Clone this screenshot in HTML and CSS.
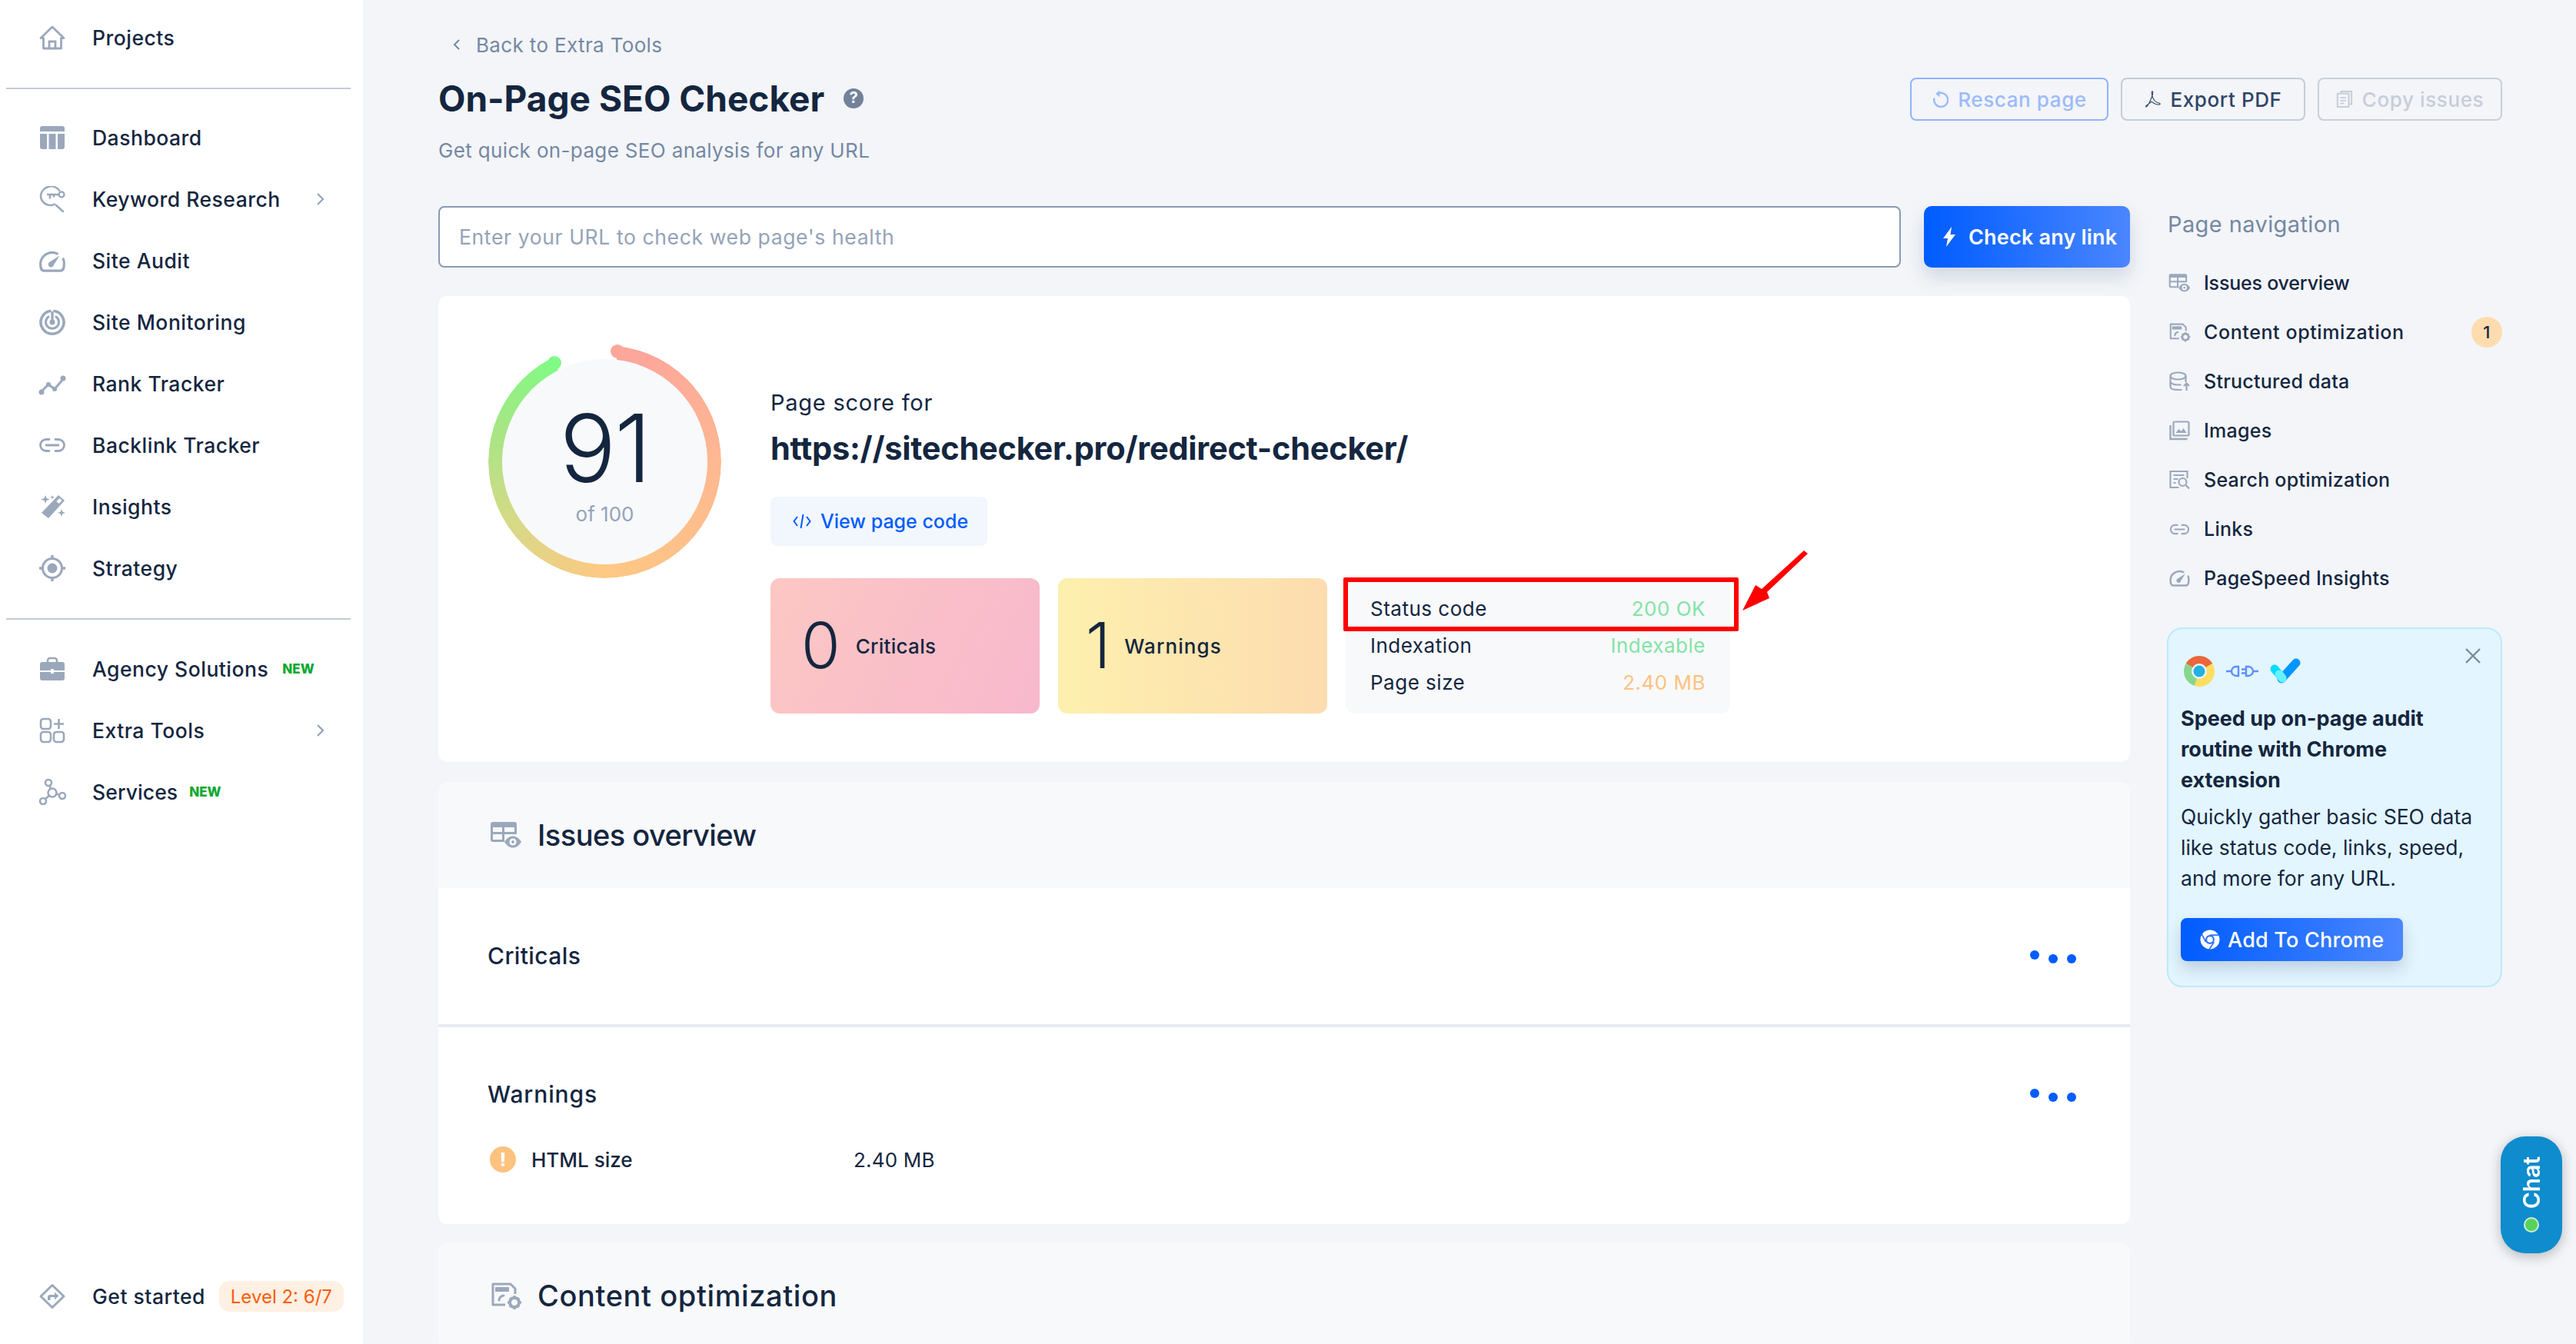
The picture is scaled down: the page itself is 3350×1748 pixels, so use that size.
FILE: index.html
```html
<!DOCTYPE html>
<html lang="en">
<head>
<meta charset="utf-8">
<title>On-Page SEO Checker</title>
<link rel="stylesheet" href="styles.css">
</head>
<body>
<svg class="defs" width="0" height="0">
  <symbol id="i-link" viewBox="0 0 34 20"><path d="M13 2.500H9a7.500 7.500 0 0 0 0 15h4M21 2.500h4a7.500 7.500 0 0 1 0 15h-4M9 10h16" fill="none" stroke="currentColor" stroke-width="2.800" stroke-linecap="round"/></symbol>
  <symbol id="i-gauge" viewBox="0 0 34 28"><path d="M23 4.500A14.500 14.500 0 0 0 2.500 16c0 4 0 9 4 9.500h21c4-.5 4-5.500 4-9.500 0-2-.4-3.500-1-5" fill="none" stroke="currentColor" stroke-width="3" stroke-linecap="round"/><path d="M26 7l-7 11a3.500 3.500 0 1 1-5-3.500z" fill="currentColor"/></symbol>
  <symbol id="i-issues" viewBox="0 0 42 36"><path fill-rule="evenodd" d="M4 1h28a3 3 0 0 1 3 3v13H19v10H4a3 3 0 0 1-3-3V4a3 3 0 0 1 3-3zM4 8v6h12V8zM19 8v6h13V8zM4 17v7h12v-7z" fill="currentColor"/><path d="M19 27c3-5 7-7.500 11-7.500s8 2.500 11 7.500c-3 5-7 7.500-11 7.500S22 32 19 27z" fill="currentColor"/><circle cx="30" cy="27" r="4.500" fill="#fff"/><circle cx="30" cy="27" r="2" fill="currentColor"/></symbol>
  <symbol id="i-content" viewBox="0 0 42 36"><path d="M20 30H4V3h23l6 6v7" fill="none" stroke="currentColor" stroke-width="3" stroke-linejoin="round"/><rect x="7" y="7" width="18" height="6" fill="currentColor"/><path d="M18 18a7 7 0 0 0-6 6" fill="none" stroke="currentColor" stroke-width="3" stroke-linecap="round"/><circle cx="32" cy="27" r="6" fill="none" stroke="currentColor" stroke-width="4"/><path d="M32 18v4M32 32v4M23 27h4M37 27h4M26 21l3 3M35 30l3 3M38 21l-3 3M29 30l-3 3" stroke="currentColor" stroke-width="3"/></symbol>
</svg>

<div class="app">
  <aside class="sidebar">
    <a class="side-row"><svg class="side-icon" viewBox="0 0 36 34"><path d="M3 17.500 18 3l15 14.500h-3.500V31h-23V17.500z" fill="none" stroke="currentColor" stroke-width="2.800" stroke-linejoin="round"/><path d="M14 31v-9h8v9" fill="none" stroke="currentColor" stroke-width="2.800"/></svg><span>Projects</span></a>
    <div class="side-rule"></div>
    <a class="side-row"><svg class="side-icon" viewBox="0 0 36 34"><path d="M2 5a3 3 0 0 1 3-3h26a3 3 0 0 1 3 3v4H2zM2 12h9v20H5a3 3 0 0 1-3-3zM13.500 12h9v20h-9zM25 12h9v17a3 3 0 0 1-3 3h-6z" fill="currentColor"/></svg><span>Dashboard</span></a>
    <a class="side-row"><svg class="side-icon" viewBox="0 0 36 34"><path d="M27 5.500A13.500 13.500 0 0 0 3 12.500C3 20 9 25 16 25c2 0 3.500-.4 5-1.500M23 25l9 8" fill="none" stroke="currentColor" stroke-width="2.600" stroke-linecap="round"/><path d="M11 11h15M15 11v5.500M20 11v3.500" fill="none" stroke="currentColor" stroke-width="2.600"/><circle cx="30" cy="11" r="3.500" fill="none" stroke="currentColor" stroke-width="2.400"/></svg><span>Keyword Research</span><svg class="chev" viewBox="0 0 12 18"><path d="M2 2l7 7-7 7" fill="none" stroke="currentColor" stroke-width="2.200"/></svg></a>
    <a class="side-row"><svg class="side-icon" viewBox="0 0 36 34"><use href="#i-gauge" width="36" height="30" y="3"/></svg><span>Site Audit</span></a>
    <a class="side-row"><svg class="side-icon" viewBox="0 0 36 34"><path d="M15 2.500a15 15 0 1 0 6 0" fill="none" stroke="currentColor" stroke-width="3.600" stroke-linecap="round"/><path d="M13 10a8.500 8.500 0 1 0 10 0" fill="none" stroke="currentColor" stroke-width="3" stroke-linecap="round"/><path d="M18 3v14" stroke="currentColor" stroke-width="3.400"/><circle cx="18" cy="17" r="3.500" fill="currentColor"/></svg><span>Site Monitoring</span></a>
    <a class="side-row"><svg class="side-icon" viewBox="0 0 36 34"><path d="M3 28 13 18l8 6 12-14" fill="none" stroke="currentColor" stroke-width="3" stroke-linecap="round" stroke-linejoin="round"/><circle cx="4" cy="28" r="3.500" fill="currentColor"/><circle cx="13" cy="18" r="3" fill="currentColor"/><circle cx="21" cy="24" r="3" fill="currentColor"/><circle cx="32" cy="10" r="3.500" fill="currentColor"/></svg><span>Rank Tracker</span></a>
    <a class="side-row"><svg class="side-icon" viewBox="0 0 36 34"><use href="#i-link" x="1" y="7" width="34" height="20"/></svg><span>Backlink Tracker</span></a>
    <a class="side-row"><svg class="side-icon" viewBox="0 0 36 34"><path d="M26 2l8 7-21 23-9-7z" fill="currentColor"/><path d="M27.500 6l3 3-4 4-3-3z" fill="#fff"/><path d="M9 2l1.500 4L15 7.500 10.500 9 9 13 7.500 9 3 7.500 7.500 6zM18 2l.8 2 2 .8-2 .8-.8 2-.8-2-2-.8 2-.8zM30 20l1.300 3.700L35 25l-3.700 1.300L30 30l-1.300-3.700L25 25l3.700-1.300z" fill="currentColor"/></svg><span>Insights</span></a>
    <a class="side-row"><svg class="side-icon" viewBox="0 0 36 34"><circle cx="18" cy="17" r="12.500" fill="none" stroke="currentColor" stroke-width="3"/><circle cx="18" cy="17" r="6.500" fill="currentColor"/><path d="M18 0v4M18 30v4M1 17h4M31 17h4" stroke="currentColor" stroke-width="3.400"/></svg><span>Strategy</span></a>
    <div class="side-rule side-rule-2"></div>
    <a class="side-row"><svg class="side-icon" viewBox="0 0 36 34"><path d="M12 8V6a3 3 0 0 1 3-3h6a3 3 0 0 1 3 3v2" fill="none" stroke="currentColor" stroke-width="2.600"/><path d="M2 11a3 3 0 0 1 3-3h26a3 3 0 0 1 3 3v8H20v-2h-4v2H2zM2 21h14v2h4v-2h14v8a3 3 0 0 1-3 3H5a3 3 0 0 1-3-3z" fill="currentColor"/></svg><span>Agency Solutions</span><em class="new">NEW</em></a>
    <a class="side-row"><svg class="side-icon" viewBox="0 0 36 34"><rect x="3" y="2" width="13" height="13" rx="3.500" fill="none" stroke="currentColor" stroke-width="2.600"/><rect x="3" y="19" width="13" height="13" rx="3.500" fill="none" stroke="currentColor" stroke-width="2.600"/><rect x="20" y="19" width="13" height="13" rx="3.500" fill="none" stroke="currentColor" stroke-width="2.600"/><path d="M26.500 2v13M20 8.500h13" stroke="currentColor" stroke-width="2.600"/></svg><span>Extra Tools</span><svg class="chev" viewBox="0 0 12 18"><path d="M2 2l7 7-7 7" fill="none" stroke="currentColor" stroke-width="2.200"/></svg></a>
    <a class="side-row"><svg class="side-icon" viewBox="0 0 36 34"><g fill="none" stroke="currentColor" stroke-width="2.600"><circle cx="13" cy="5" r="4"/><circle cx="18" cy="18" r="5.500"/><circle cx="31" cy="22" r="4"/><circle cx="6" cy="29" r="4"/><path d="M14.500 9l1.500 4M23.500 19.500l4 1.200M14 22l-5 4"/></g></svg><span class="services">Services</span><em class="new new-services">NEW</em></a>
    <a class="side-row side-bottom"><svg class="side-icon" viewBox="0 0 36 34"><path d="M18 2.500 33 17 18 31.500 3 17z" fill="none" stroke="currentColor" stroke-width="3" stroke-linejoin="round"/><path d="M12 22v-4a3 3 0 0 1 3-3h6v-3.500l5.500 5-5.500 5V18h-5.500v4z" fill="currentColor"/></svg><span>Get started</span><b class="level">Level 2: 6/7</b></a>
  </aside>

  <main class="main">
    <header class="page-head">
      <div class="head-text">
        <a class="back"><svg class="back-chev" viewBox="0 0 10 16"><path d="M8 2 2 8l6 6" fill="none" stroke="currentColor" stroke-width="2"/></svg>Back to Extra Tools</a>
        <h1 class="title">On-Page SEO Checker<svg class="help" viewBox="0 0 26 26"><circle cx="13" cy="13" r="13" fill="#718299"/><text x="13" y="19" text-anchor="middle" class="help-q">?</text></svg></h1>
        <p class="subtitle">Get quick on-page SEO analysis for any URL</p>
      </div>
      <div class="head-actions">
        <button class="act act-rescan"><svg viewBox="0 0 20 26" class="act-i"><path d="M6 6.500a9 9 0 1 1-3.500 5" fill="none" stroke="currentColor" stroke-width="2.400"/><path d="M9.500 1.500v9L4 6z" fill="currentColor"/></svg>Rescan page</button>
        <button class="act act-export"><svg viewBox="0 0 24 26" class="act-i"><path d="M11 2c-1.500 0-1 4 0 7 1.500 5 4 8 8 9 3 .8 4 2 2 2.500-4 1-9-2-11-4-2 1.500-7 5-8 6s0 2.500 2 0c2-3 5-9 7-15 .8-2.500 1-5.500 0-5.500z" fill="none" stroke="currentColor" stroke-width="1.200"/></svg>Export PDF</button>
        <button class="act act-copy"><svg viewBox="0 0 24 26" class="act-i"><path d="M7 5V2h15v18h-4" fill="none" stroke="currentColor" stroke-width="2.200"/><path d="M2 5h16v19H2z" fill="none" stroke="currentColor" stroke-width="2.200" stroke-linejoin="round"/><path d="M6 11h8M6 15h8M6 19h5" stroke="currentColor" stroke-width="2"/></svg>Copy issues</button>
      </div>
    </header>

    <div class="columns">
      <div class="content">
        <div class="search">
          <div class="search-input">Enter your URL to check web page's health</div>
          <button class="search-btn"><svg class="bolt" viewBox="0 0 18 26"><path d="M12 0 1 15h6L5 26l12-16h-6.500z" fill="#fff"/></svg>Check any link</button>
        </div>

        <section class="score-card">
          <div class="gauge">
            <div class="gauge-ring"></div>
            <span class="cap cap-start"></span>
            <span class="cap cap-end"></span>
            <div class="gauge-face">
              <div class="gauge-num">91</div>
              <div class="gauge-of">of 100</div>
            </div>
          </div>
          <div class="score-info">
            <div class="score-for">Page score for</div>
            <div class="score-url">https://sitechecker.pro/redirect-checker/</div>
            <a class="code-btn"><svg class="code-i" viewBox="0 0 24 20"><path d="M6 4 1.500 10 6 16M18 4l4.500 6-4.500 6M13.500 1l-3 18" fill="none" stroke="currentColor" stroke-width="2"/></svg>View page code</a>
            <div class="tiles">
              <div class="tile tile-crit"><span class="tile-num">0</span><span class="tile-label">Criticals</span></div>
              <div class="tile tile-warn"><span class="tile-num">1</span><span class="tile-label">Warnings</span></div>
              <div class="stats">
                <div class="stat"><span>Status code</span><span class="ok">200 OK</span></div>
                <div class="stat"><span>Indexation</span><span class="ok">Indexable</span></div>
                <div class="stat"><span>Page size</span><span class="warn">2.40 MB</span></div>
                <div class="mark-box"></div>
                <svg class="mark-arrow" viewBox="0 0 90 84"><path d="M82 1l5 4-53 50 3 8L2 79l17-33 8 5z" fill="#f00"/></svg>
              </div>
            </div>
          </div>
        </section>

        <section class="panel">
          <div class="panel-head"><svg class="panel-i"><use href="#i-issues"/></svg><h2 class="panel-t-a">Issues overview</h2></div>
          <div class="panel-row panel-row-a"><span>Criticals</span><span class="dots"><i class="up"></i><i></i><i></i></span></div>
          <div class="panel-row panel-row-b">
            <div class="row-top"><span class="warn-head">Warnings</span><span class="dots"><i class="up"></i><i></i><i></i></span></div>
            <div class="issue"><span class="issue-mark">!</span><span class="issue-name">HTML size</span><span class="issue-val">2.40 MB</span></div>
          </div>
        </section>

        <section class="panel">
          <div class="panel-head"><svg class="panel-i"><use href="#i-content"/></svg><h2 class="panel-t-b">Content optimization</h2></div>
        </section>
      </div>

      <aside class="rail">
        <h3 class="rail-title">Page navigation</h3>
        <nav class="rail-nav">
          <a class="rail-tight"><svg class="rail-i"><use href="#i-issues"/></svg>Issues overview</a>
          <a class="rail-wide"><svg class="rail-i"><use href="#i-content"/></svg>Content optimization<b class="count">1</b></a>
          <a><svg class="rail-i" viewBox="0 0 28 26"><g fill="none" stroke="currentColor" stroke-width="2.200"><ellipse cx="12" cy="6" rx="10" ry="4.500"/><path d="M2 6v14c0 2.500 4 4 10 4h5M22 6v8M2 13c0 2.500 4 4.500 10 4.500h4"/><path d="M23 25v-9M19.500 19l3.500-3.500 3.500 3.500"/></g></svg>Structured data</a>
          <a><svg class="rail-i" viewBox="0 0 28 26"><path d="M2 6v18h22" fill="none" stroke="currentColor" stroke-width="2.400"/><rect x="6" y="1.500" width="20" height="18" rx="1.500" fill="none" stroke="currentColor" stroke-width="2.200"/><path d="M9 16l4-5 3 3 3-4 4 6z" fill="currentColor"/></svg>Images</a>
          <a><svg class="rail-i" viewBox="0 0 28 26"><path d="M13 23H2V2h22v9" fill="none" stroke="currentColor" stroke-width="2.200"/><path d="M6 7h14M6 12h6M6 17h3" stroke="currentColor" stroke-width="2.200"/><circle cx="18" cy="16" r="5" fill="none" stroke="currentColor" stroke-width="2.200"/><path d="M22 20l4.500 4.500" stroke="currentColor" stroke-width="2.400"/></svg>Search optimization</a>
          <a><svg class="rail-i" viewBox="0 0 28 26"><use href="#i-link" y="6" width="28" height="15"/></svg>Links</a>
          <a><svg class="rail-i" viewBox="0 0 28 26"><use href="#i-gauge" y="1" width="28" height="24"/></svg>PageSpeed Insights</a>
        </nav>

        <div class="promo">
          <div class="promo-top">
            <svg class="promo-chrome" viewBox="0 0 40 40">
              <path d="M20 20 2.700 10A20 20 0 0 1 37.300 10z" fill="#ea673b"/>
              <path d="M20 20 2.700 10A20 20 0 0 0 14 39.100z" fill="#86d78c"/>
              <path d="M20 20 37.300 10A20 20 0 0 1 14 39.100z" fill="#ffdd5e"/>
              <circle cx="20" cy="20" r="10" fill="#e8f5fb"/>
              <circle cx="20" cy="20" r="7.500" fill="#22b1e0"/>
            </svg>
            <svg class="promo-plug" viewBox="0 0 42 16"><g fill="none" stroke="#5b8efc" stroke-width="2.400"><path d="M0 8h6M16 2h-3a6 6 0 0 0 0 12h3zM26 2h3a6 6 0 0 1 0 12h-3zM20 5.500h6M20 10.500h6M36 8h6"/></g></svg>
            <svg class="promo-check" viewBox="0 0 40 34"><path d="M15 27 34 6" stroke="#0096ff" stroke-width="11" stroke-linecap="round"/><path d="M6 14l10 12" stroke="#00dcff" stroke-width="11" stroke-linecap="round"/><path d="M12 21l4 5" stroke="#66f1ff" stroke-width="11" stroke-linecap="round"/></svg>
            <svg class="promo-x" viewBox="0 0 20 20"><path d="M1 1l18 18M19 1 1 19" stroke="#7a8aa0" stroke-width="2.400"/></svg>
          </div>
          <h4 class="promo-title">Speed up on-page audit routine with Chrome extension</h4>
          <p class="promo-text">Quickly gather basic SEO data like status code, links, speed, and more for any URL.</p>
          <button class="promo-btn"><svg class="promo-btn-i" viewBox="0 0 24 24"><circle cx="12" cy="12" r="11.500" fill="#fff"/><circle cx="12" cy="12" r="5.500" fill="#2f72ff"/><circle cx="12" cy="12" r="3.500" fill="#fff"/><path d="M12 6.500H23M7.200 15 2 5.500M16.800 15 11 24" stroke="#2f72ff" stroke-width="1.600"/></svg>Add To Chrome</button>
        </div>
      </aside>
    </div>
  </main>
</div>

<div class="chat"><span class="chat-text">Chat</span><span class="chat-dot"></span></div>
</body>
</html>
```
FILE: styles.css
```css
* { box-sizing: border-box; }
html, body { margin: 0; padding: 0; }
body {
  width: 3350px;
  height: 1748px;
  overflow: hidden;
  background: #f3f5f8;
  color: #14263f;
  font-family: "Inter", "Liberation Sans", sans-serif;
  position: relative;
}
.defs { position: absolute; }
h1, h2, h3, h4, p { margin: 0; font-weight: inherit; }
button { font-family: inherit; cursor: pointer; }

.app { display: flex; height: 1748px; }

/* Sidebar */
.sidebar {
  width: 472px;
  flex: none;
  background: #fff;
  display: flex;
  flex-direction: column;
  padding: 9px 16px 22px 8px;
  color: #9ba8bc;
}
.side-row {
  height: 80px;
  display: flex;
  align-items: center;
  flex: none;
  padding-left: 42px;
  color: #14263f;
  font-size: 26.500px;
  font-weight: 500;
  letter-spacing: .5px;
}
.side-icon { width: 36px; height: 34px; flex: none; color: #9ba8bc; margin-right: 34px; }
.chev { width: 12px; height: 18px; color: #94a3b8; margin-left: auto; margin-right: 33px; }
.side-rule { height: 2px; margin: 25px 0 23px; background: #c5cbd8; flex: none; }
.side-rule-2 { margin: 25px 0 24px; }
.new { font-style: normal; font-weight: 800; font-size: 17px; color: #0aa82e; margin-left: 18px; letter-spacing: 0; }
.services { letter-spacing: .1px; }
.new-services { margin-left: 15px; }
.side-bottom { margin-top: auto; }
.level {
  margin-left: 18px;
  height: 40px;
  width: 162px;
  border-radius: 14px;
  background: #fef0e2;
  color: #fc5c0a;
  font-size: 24px;
  font-weight: 400;
  display: flex;
  align-items: center;
  justify-content: center;
  letter-spacing: 0;
}

/* Main */
.main { flex: 1; min-width: 0; padding: 40px 96px 0 98px; overflow: hidden; }
.page-head { display: flex; justify-content: space-between; align-items: flex-start; }
.back { display: flex; align-items: center; height: 36px; color: #7588a3; font-size: 26px; letter-spacing: .35px; padding-left: 19px; }
.back-chev { width: 10px; height: 16px; margin-right: 20px; }
.title { display: flex; align-items: center; height: 60px; margin-top: 22px; font-size: 46px; font-weight: 700; line-height: 60px; color: #14263f; }
.help { width: 26px; height: 26px; margin-left: 25px; }
.help-q { fill: #fff; font-size: 20px; font-weight: 700; }
.subtitle { margin-top: 20px; height: 36px; line-height: 36px; font-size: 26px; letter-spacing: .35px; color: #7588a3; }
.head-actions { display: flex; gap: 16px; margin-top: 61px; }
.act {
  height: 56px;
  display: flex;
  align-items: center;
  justify-content: center;
  gap: 12px;
  background: transparent;
  border: 2px solid #c5ccd9;
  border-radius: 8px;
  font-size: 26px;
  font-weight: 500;
  letter-spacing: .6px;
  padding: 0;
}
.act-i { width: 22px; height: 26px; flex: none; }
.act-rescan { width: 258px; border-color: #8fb4fc; color: #9dbbfb; }
.act-export { width: 240px; color: #2f4468; }
.act-copy { width: 240px; color: #c7cdd9; border-color: #c9cfda; }

.columns { display: flex; gap: 50px; margin-top: 54px; }
.content { width: 2200px; flex: none; }
.search { display: flex; gap: 30px; height: 80px; }
.search-input {
  flex: 1;
  display: flex;
  align-items: center;
  background: #fff;
  border: 2px solid #8a9ab3;
  border-radius: 8px;
  padding-left: 25px;
  color: #94a3b8;
  font-size: 26.500px;
  letter-spacing: .63px;
}
.search-btn {
  width: 268px;
  flex: none;
  border: 0;
  border-radius: 10px;
  background: linear-gradient(90deg, #005cff, #4a86ff);
  box-shadow: 0 12px 24px rgba(30, 60, 110, .16);
  color: #fff;
  font-size: 27px;
  font-weight: 600;
  letter-spacing: .2px;
  display: flex;
  align-items: center;
  padding: 0 0 0 24px;
  gap: 16px;
  white-space: nowrap;
}
.bolt { width: 18px; height: 26px; flex: none; }

/* Score card */
.score-card {
  margin-top: 37px;
  height: 606px;
  background: #fff;
  border-radius: 12px;
  padding: 64px 0 0 65px;
  display: flex;
  gap: 64px;
}
.gauge { width: 303px; height: 303px; flex: none; position: relative; }
.gauge-ring {
  position: absolute;
  inset: 0;
  border-radius: 50%;
  background: conic-gradient(from 0deg, transparent 6.500deg, #fda69b 6.500deg, #fda69b 20deg, #feb892 90deg, #fec883 180deg, #d8d987 235deg, #a8e584 285deg, #80fa85 333deg, transparent 333deg, transparent 360deg);
  -webkit-mask: radial-gradient(closest-side, transparent calc(100% - 19px), #000 calc(100% - 18px));
  mask: radial-gradient(closest-side, transparent calc(100% - 19px), #000 calc(100% - 18px));
}
.cap { position: absolute; width: 18px; height: 18px; border-radius: 50%; }
.cap-start { left: 159px; top: -1px; background: #fda69b; }
.cap-end { left: 77px; top: 14px; background: #80fa85; }
.gauge-face {
  position: absolute;
  inset: 18px;
  border-radius: 50%;
  background: #f8f9fb;
  display: flex;
  flex-direction: column;
  align-items: center;
}
.gauge-num { margin-top: 66px; height: 100px; line-height: 100px; font-size: 122px; font-weight: 300; color: #14263f; letter-spacing: -2px; }
.gauge-of { margin-top: 19px; font-size: 26px; line-height: 34px; color: #94a3b8; }

.score-info { padding-top: 57px; flex: 1; min-width: 0; }
.score-for { height: 36px; line-height: 36px; font-size: 29px; letter-spacing: .75px; color: #14263f; }
.score-url { margin-top: 11px; height: 60px; line-height: 60px; font-size: 41.500px; font-weight: 700; color: #14263f; letter-spacing: -.25px; }
.code-btn {
  margin-top: 33px;
  width: 282px;
  height: 64px;
  border-radius: 8px;
  background: #f2f7fe;
  color: #005cff;
  font-size: 25px;
  font-weight: 500;
  display: flex;
  align-items: center;
  padding-left: 29px;
}
.code-i { width: 24px; height: 20px; margin-right: 12px; flex: none; }
.tiles { margin-top: 42px; display: flex; gap: 24px; align-items: stretch; height: 176px; }
.tile { width: 350px; border-radius: 12px; display: flex; align-items: center; padding-left: 40px; }
.tile-crit { background: linear-gradient(115deg, #fcc7c3, #f7b8cd); }
.tile-warn { background: linear-gradient(90deg, #fdf0ae, #fddcaf); padding-left: 36px; }
.tile-num { font-size: 82px; font-weight: 300; line-height: 1; color: #14263f; }
.tile-label { margin-left: 18px; font-size: 26px; font-weight: 500; letter-spacing: 1.100px; color: #14263f; }
.tile-crit .tile-label { margin-left: 20px; letter-spacing: .3px; }
.stats {
  width: 500px;
  border-radius: 12px;
  background: #f8f9fb;
  padding: 15px 32px 16px 32px;
  position: relative;
  font-size: 26px;
  letter-spacing: .5px;
  color: #14263f;
}
.stat { display: flex; justify-content: space-between; height: 48px; align-items: center; }
.ok { color: #84e3a5; }
.warn { color: #fdc27f; }
.mark-box { position: absolute; left: -3px; top: -1px; width: 514px; height: 70px; border: 6px solid #f00; border-radius: 2px; }
.mark-arrow { position: absolute; left: 514px; top: -37px; width: 90px; height: 84px; }

/* Panels */
.panel { margin-top: 26px; background: #fff; border-radius: 12px; overflow: hidden; }
.panel + .panel { margin-top: 24px; }
.panel-head { height: 138px; background: #f8f9fb; display: flex; align-items: center; padding-left: 67px; color: #9ba8bc; }
.panel-i { width: 42px; height: 36px; margin-right: 20px; color: #9ba8bc; }
.panel-head h2 { font-size: 38px; font-weight: 500; color: #14263f; }
.panel-head .panel-t-a { letter-spacing: -.55px; }
.panel-head .panel-t-b { letter-spacing: .6px; }
.panel-row { padding: 0 64px; font-size: 30px; font-weight: 500; letter-spacing: .4px; }
.panel-row-a { height: 181px; border-bottom: 4px solid #e8ecf2; display: flex; justify-content: space-between; align-items: flex-start; padding-top: 70px; }
.panel-row-b { height: 256px; padding-top: 69px; }
.warn-head { letter-spacing: .9px; }
.row-top { display: flex; justify-content: space-between; align-items: flex-start; }
.dots { display: flex; gap: 12px; margin-right: 6px; padding-top: 16px; }
.dots i { width: 12px; height: 12px; border-radius: 50%; background: #005cff; display: block; }
.dots i.up { transform: translateY(-5px); }
.issue { display: flex; align-items: center; margin-top: 50px; font-size: 26px; letter-spacing: 0; }
.issue-mark { width: 34px; height: 34px; margin-left: 3px; border-radius: 50%; background: #fdc27f; color: #fff; font-weight: 800; font-size: 24px; display: flex; align-items: center; justify-content: center; }
.issue-name { width: 419px; margin-left: 20px; }
.issue-val { font-weight: 400; letter-spacing: .2px; }

/* Right rail */
.rail { width: 434px; flex: none; padding-top: 6px; }
.rail-title { height: 36px; line-height: 36px; font-size: 29px; color: #7588a3; letter-spacing: .4px; margin-left: -1px; }
.rail-nav { margin-top: 26px; display: flex; flex-direction: column; }
.rail-nav a { height: 64px; display: flex; align-items: center; font-size: 25px; font-weight: 500; color: #14263f; letter-spacing: .25px; }
.rail-nav a.rail-tight { letter-spacing: -.2px; }
.rail-nav a.rail-wide { letter-spacing: .6px; }
.rail-i { width: 29px; height: 26px; margin-right: 17px; flex: none; color: #9ba8bc; }
.count { width: 40px; height: 40px; margin-left: auto; border-radius: 50%; background: #fedcae; display: flex; align-items: center; justify-content: center; font-size: 22px; font-weight: 500; }
.promo {
  margin-top: 32px;
  margin-left: -2px;
  height: 468px;
  background: #e3f5fe;
  border: 2px solid #bde9fd;
  border-radius: 20px;
  padding: 35px 16px 0 16px;
  color: #14263f;
}
.promo-top { display: flex; align-items: center; height: 40px; margin-left: 4px; }
.promo-chrome { width: 40px; height: 40px; }
.promo-plug { width: 42px; height: 16px; margin-left: 15px; }
.promo-check { width: 40px; height: 34px; margin-left: 15px; }
.promo-x { width: 20px; height: 20px; margin-left: auto; margin-right: 10px; transform: translateY(-20px); }
.promo-title { margin-top: 22px; font-size: 27px; line-height: 40px; font-weight: 700; width: 390px; }
.promo-text { margin-top: 7px; font-size: 26.500px; line-height: 40px; width: 400px; }
.promo-btn {
  margin-top: 32px;
  width: 289px;
  height: 56px;
  border: 0;
  border-radius: 8px;
  background: linear-gradient(90deg, #005cff, #4a86ff);
  box-shadow: 0 10px 20px rgba(30, 60, 110, .2);
  color: #fff;
  font-size: 27px;
  font-weight: 500;
  letter-spacing: .2px;
  display: flex;
  align-items: center;
  padding-left: 25px;
  gap: 10px;
}
.promo-btn-i { width: 26px; height: 26px; flex: none; }

/* Chat */
.chat {
  position: absolute;
  left: 3252px;
  top: 1478px;
  width: 80px;
  height: 152px;
  border-radius: 32px;
  background: #0e8ccd;
  box-shadow: 0 4px 16px rgba(0, 0, 0, .25);
  display: flex;
  flex-direction: column;
  align-items: center;
  color: #fff;
}
.chat-text { writing-mode: vertical-rl; transform: rotate(180deg); margin-top: 26px; font-size: 30px; font-weight: 600; line-height: 40px; }
.chat-dot { margin-top: 11px; width: 20px; height: 20px; border-radius: 50%; background: #58d25c; border: 2px solid #cfeed0; }
```
